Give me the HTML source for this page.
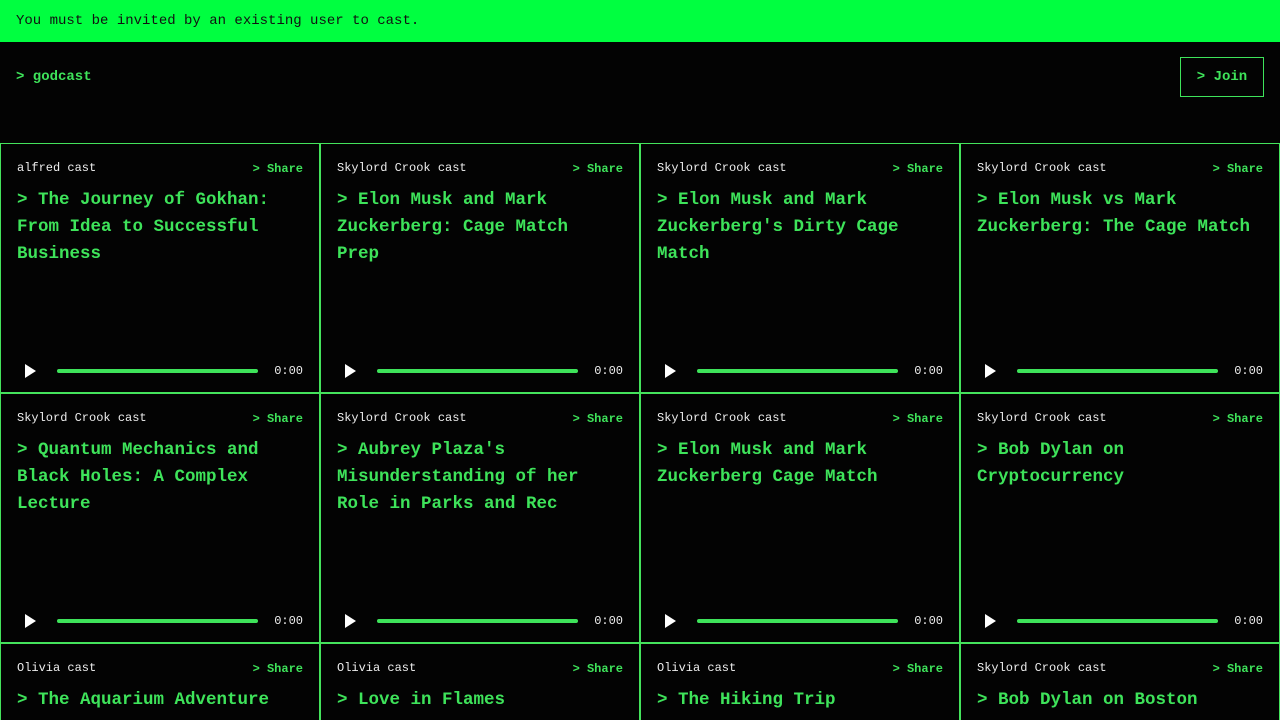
<!DOCTYPE html>
<html><head><style>
*{box-sizing:border-box;margin:0;padding:0}
html,body{width:1280px;height:720px;overflow:hidden}
body{background:#030303;font-family:"Liberation Mono",monospace;color:#3ee35a}
.banner{height:42px;background:#00ff40;color:#111;font-size:14px;line-height:42px;padding-left:16px}
.nav{height:101px;position:relative}
.logo{position:absolute;left:16px;top:27px;font-size:14px;font-weight:bold;color:#3ee35a}
.join{position:absolute;left:1180px;top:15px;width:84px;height:40px;border:1px solid #3ee35a;font-size:14px;font-weight:bold;line-height:38px;text-align:center}
.grid{display:grid;grid-template-columns:repeat(4,320px);grid-auto-rows:250px;height:577px;overflow:hidden}
.card{border:1.5px solid #44e35c;position:relative;padding:16px}
.by{position:absolute;left:16px;top:17px;font-size:12px;color:#eee}
.share{position:absolute;right:16px;top:18px;font-size:12px;font-weight:bold}
.title{position:absolute;left:16px;top:43px;width:276px;font-size:17.5px;font-weight:bold;line-height:27px}
.player{position:absolute;left:0;right:0;top:217px;height:20px}
.play{position:absolute;left:24px;top:3px;width:0;height:0;border-left:11px solid #fff;border-top:7px solid transparent;border-bottom:7px solid transparent}
.bar{position:absolute;left:56px;width:201px;top:8px;height:4px;background:#3ee35a;border-radius:2px}
.time{position:absolute;right:16px;top:3px;font-size:12px;color:#eee}
</style></head><body>
<div class="banner">You must be invited by an existing user to cast.</div>
<div class="nav"><div class="logo">&gt; godcast</div><div class="join">&gt; Join</div></div>
<div class="grid">
<div class="card"><div class="by">alfred cast</div><div class="share">&gt; Share</div><div class="title">&gt; The Journey of Gokhan: From Idea to Successful Business</div><div class="player"><div class="play"></div><div class="bar"></div><div class="time">0:00</div></div></div>
<div class="card"><div class="by">Skylord Crook cast</div><div class="share">&gt; Share</div><div class="title">&gt; Elon Musk and Mark Zuckerberg: Cage Match Prep</div><div class="player"><div class="play"></div><div class="bar"></div><div class="time">0:00</div></div></div>
<div class="card"><div class="by">Skylord Crook cast</div><div class="share">&gt; Share</div><div class="title">&gt; Elon Musk and Mark Zuckerberg's Dirty Cage Match</div><div class="player"><div class="play"></div><div class="bar"></div><div class="time">0:00</div></div></div>
<div class="card"><div class="by">Skylord Crook cast</div><div class="share">&gt; Share</div><div class="title">&gt; Elon Musk vs Mark Zuckerberg: The Cage Match</div><div class="player"><div class="play"></div><div class="bar"></div><div class="time">0:00</div></div></div>
<div class="card"><div class="by">Skylord Crook cast</div><div class="share">&gt; Share</div><div class="title">&gt; Quantum Mechanics and Black Holes: A Complex Lecture</div><div class="player"><div class="play"></div><div class="bar"></div><div class="time">0:00</div></div></div>
<div class="card"><div class="by">Skylord Crook cast</div><div class="share">&gt; Share</div><div class="title">&gt; Aubrey Plaza's Misunderstanding of her Role in Parks and Rec</div><div class="player"><div class="play"></div><div class="bar"></div><div class="time">0:00</div></div></div>
<div class="card"><div class="by">Skylord Crook cast</div><div class="share">&gt; Share</div><div class="title">&gt; Elon Musk and Mark Zuckerberg Cage Match</div><div class="player"><div class="play"></div><div class="bar"></div><div class="time">0:00</div></div></div>
<div class="card"><div class="by">Skylord Crook cast</div><div class="share">&gt; Share</div><div class="title">&gt; Bob Dylan on Cryptocurrency</div><div class="player"><div class="play"></div><div class="bar"></div><div class="time">0:00</div></div></div>
<div class="card"><div class="by">Olivia cast</div><div class="share">&gt; Share</div><div class="title">&gt; The Aquarium Adventure</div></div>
<div class="card"><div class="by">Olivia cast</div><div class="share">&gt; Share</div><div class="title">&gt; Love in Flames</div></div>
<div class="card"><div class="by">Olivia cast</div><div class="share">&gt; Share</div><div class="title">&gt; The Hiking Trip</div></div>
<div class="card"><div class="by">Skylord Crook cast</div><div class="share">&gt; Share</div><div class="title">&gt; Bob Dylan on Boston</div></div>
</div>
</body></html>
